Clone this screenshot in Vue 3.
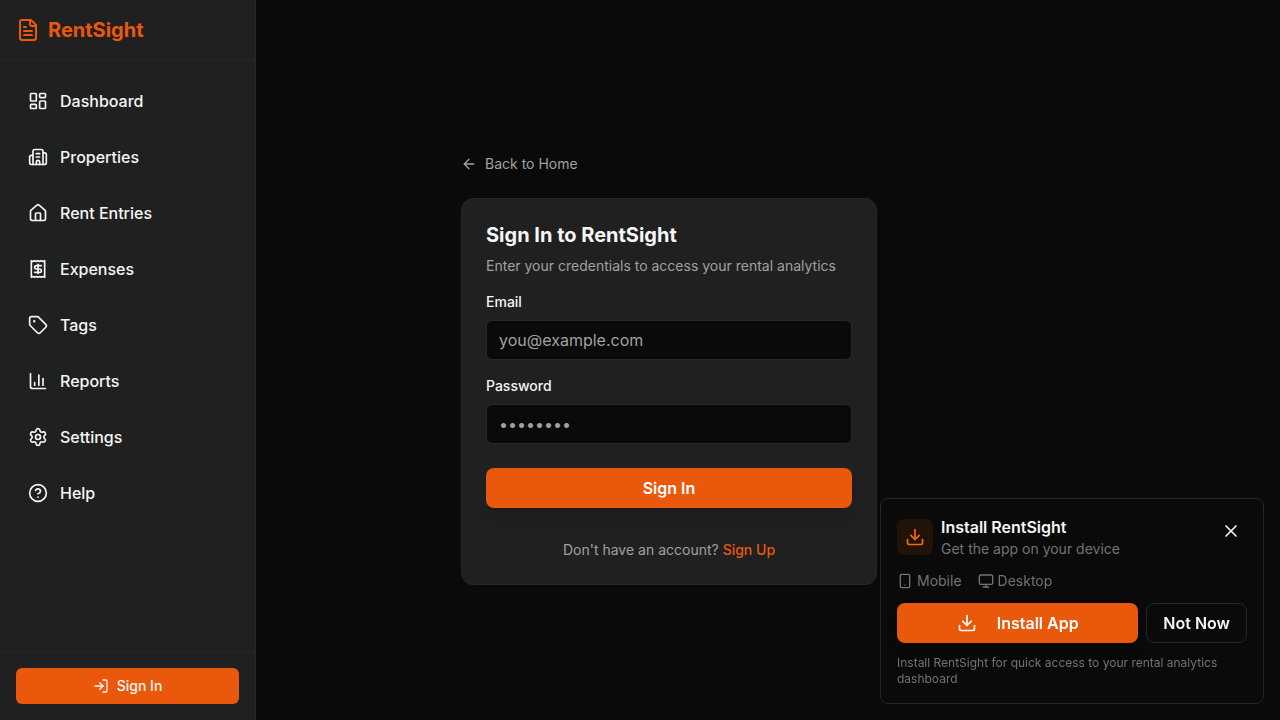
<script setup>
import { h } from 'vue'

const glyphs = {
  file: ['M15 2H6a2 2 0 0 0-2 2v16a2 2 0 0 0 2 2h12a2 2 0 0 0 2-2V7Z', 'M14 2v4a2 2 0 0 0 2 2h4', 'M10 9H8', 'M16 13H8', 'M16 17H8'],
  dashboard: ['M4 3h5a1 1 0 0 1 1 1v7a1 1 0 0 1-1 1H4a1 1 0 0 1-1-1V4a1 1 0 0 1 1-1Z', 'M15 3h5a1 1 0 0 1 1 1v3a1 1 0 0 1-1 1h-5a1 1 0 0 1-1-1V4a1 1 0 0 1 1-1Z', 'M15 12h5a1 1 0 0 1 1 1v7a1 1 0 0 1-1 1h-5a1 1 0 0 1-1-1v-7a1 1 0 0 1 1-1Z', 'M4 16h5a1 1 0 0 1 1 1v3a1 1 0 0 1-1 1H4a1 1 0 0 1-1-1v-3a1 1 0 0 1 1-1Z'],
  building: ['M10 12h4', 'M10 8h4', 'M14 21v-3a2 2 0 0 0-4 0v3', 'M6 10H4a2 2 0 0 0-2 2v7a2 2 0 0 0 2 2h16a2 2 0 0 0 2-2V9a2 2 0 0 0-2-2h-2', 'M6 21V5a2 2 0 0 1 2-2h8a2 2 0 0 1 2 2v16'],
  house: ['M15 21v-8a1 1 0 0 0-1-1h-4a1 1 0 0 0-1 1v8', 'M3 10a2 2 0 0 1 .709-1.528l7-6a2 2 0 0 1 2.582 0l7 6A2 2 0 0 1 21 10v9a2 2 0 0 1-2 2H5a2 2 0 0 1-2-2z'],
  receipt: ['M4 2v20l2-1 2 1 2-1 2 1 2-1 2 1 2-1 2 1V2l-2 1-2-1-2 1-2-1-2 1-2-1-2 1Z', 'M16 8h-6a2 2 0 1 0 0 4h4a2 2 0 1 1 0 4H8', 'M12 17.5v-11'],
  tag: ['M12.586 2.586A2 2 0 0 0 11.172 2H4a2 2 0 0 0-2 2v7.172a2 2 0 0 0 .586 1.414l8.704 8.704a2.426 2.426 0 0 0 3.42 0l6.58-6.58a2.426 2.426 0 0 0 0-3.42z', 'M7 7.5a.5.5 0 1 0 1 0a.5.5 0 1 0-1 0'],
  chart: ['M3 3v16a2 2 0 0 0 2 2h16', 'M18 17V9', 'M13 17V5', 'M8 17v-3'],
  gear: ['M9.671 4.136a2.34 2.34 0 0 1 4.659 0 2.34 2.34 0 0 0 3.319 1.915 2.34 2.34 0 0 1 2.33 4.033 2.34 2.34 0 0 0 0 3.831 2.34 2.34 0 0 1-2.33 4.033 2.34 2.34 0 0 0-3.319 1.915 2.34 2.34 0 0 1-4.659 0 2.34 2.34 0 0 0-3.32-1.915 2.34 2.34 0 0 1-2.33-4.033 2.34 2.34 0 0 0 0-3.831A2.34 2.34 0 0 1 6.35 6.051a2.34 2.34 0 0 0 3.319-1.915', 'M9 12a3 3 0 1 0 6 0a3 3 0 1 0-6 0'],
  help: ['M2 12a10 10 0 1 0 20 0a10 10 0 1 0-20 0', 'M9.09 9a3 3 0 0 1 5.83 1c0 2-3 3-3 3', 'M12 17h.01'],
  login: ['m10 17 5-5-5-5', 'M15 12H3', 'M15 3h4a2 2 0 0 1 2 2v14a2 2 0 0 1-2 2h-4'],
  back: ['m12 19-7-7 7-7', 'M19 12H5'],
  download: ['M12 15V3', 'M21 15v4a2 2 0 0 1-2 2H5a2 2 0 0 1-2-2v-4', 'm7 10 5 5 5-5'],
  close: ['M18 6 6 18', 'm6 6 12 12'],
  phone: ['M7 2h10a2 2 0 0 1 2 2v16a2 2 0 0 1-2 2H7a2 2 0 0 1-2-2V4a2 2 0 0 1 2-2Z', 'M12 18h.01'],
  monitor: ['M4 3h16a2 2 0 0 1 2 2v10a2 2 0 0 1-2 2H4a2 2 0 0 1-2-2V5a2 2 0 0 1 2-2Z', 'M8 21h8', 'M12 17v4']
}

const Icon = (props) =>
  h(
    'svg',
    {
      width: props.size,
      height: props.size,
      viewBox: '0 0 24 24',
      fill: 'none',
      stroke: 'currentColor',
      'stroke-width': 2,
      'stroke-linecap': 'round',
      'stroke-linejoin': 'round',
      'aria-hidden': 'true'
    },
    glyphs[props.name].map((d) => h('path', { d }))
  )
Icon.props = ['name', 'size']

const links = [
  { label: 'Dashboard', icon: 'dashboard' },
  { label: 'Properties', icon: 'building' },
  { label: 'Rent Entries', icon: 'house' },
  { label: 'Expenses', icon: 'receipt' },
  { label: 'Tags', icon: 'tag' },
  { label: 'Reports', icon: 'chart' },
  { label: 'Settings', icon: 'gear' },
  { label: 'Help', icon: 'help' }
]
</script>

<template>
  <div class="shell">
    <aside class="sidebar">
      <a class="brand" href="#"><Icon name="file" size="24" /><span>RentSight</span></a>
      <nav class="nav">
        <a v-for="link in links" :key="link.label" class="nav-link" href="#">
          <Icon :name="link.icon" size="20" /><span>{{ link.label }}</span>
        </a>
      </nav>
      <div class="sidebar-foot">
        <button class="side-signin" type="button"><Icon name="login" size="16" />Sign In</button>
      </div>
    </aside>

    <main class="main">
      <div class="auth">
        <a class="back" href="#"><Icon name="back" size="16" />Back to Home</a>
        <form class="card" @submit.prevent>
          <h1 class="title">Sign In to RentSight</h1>
          <p class="desc">Enter your credentials to access your rental analytics</p>
          <div class="field">
            <label for="email">Email</label>
            <input id="email" type="email" placeholder="you@example.com" />
          </div>
          <div class="field">
            <label for="password">Password</label>
            <input id="password" type="password" placeholder="••••••••" />
          </div>
          <button class="primary submit" type="submit">Sign In</button>
          <p class="signup">Don't have an account? <a href="#">Sign Up</a></p>
        </form>
      </div>
    </main>

    <section class="toast" aria-label="Install RentSight">
      <div class="toast-head">
        <div class="badge"><Icon name="download" size="20" /></div>
        <div class="toast-text">
          <h2>Install RentSight</h2>
          <p>Get the app on your device</p>
        </div>
        <button class="close" type="button" aria-label="Close"><Icon name="close" size="20" /></button>
      </div>
      <div class="devices">
        <span><Icon name="phone" size="16" />Mobile</span>
        <span><Icon name="monitor" size="16" />Desktop</span>
      </div>
      <div class="actions">
        <button class="primary install" type="button"><Icon name="download" size="20" />Install App</button>
        <button class="outline" type="button">Not Now</button>
      </div>
      <p class="note">Install RentSight for quick access to your rental analytics dashboard</p>
    </section>
  </div>
</template>

<style>
body {
  background: #0a0a0a;
}
</style>

<style scoped>
* {
  box-sizing: border-box;
  margin: 0;
}
.shell {
  display: flex;
  min-height: 100vh;
  background: #0a0a0a;
  color: #f5f5f5;
  font: 400 16px/24px Inter, "Liberation Sans", sans-serif;
}
svg {
  flex: none;
  display: block;
}
a {
  color: inherit;
  text-decoration: none;
}
button,
input {
  font: inherit;
  color: inherit;
}
button {
  display: flex;
  align-items: center;
  justify-content: center;
  border: 0;
  padding: 0;
  cursor: pointer;
}
.sidebar {
  display: flex;
  flex-direction: column;
  flex: none;
  width: 256px;
  background: #202020;
  border-right: 1px solid #272727;
}
.brand {
  display: flex;
  align-items: center;
  gap: 8px;
  padding: 16px;
  border-bottom: 1px solid #272727;
  color: #ea580c;
  font-size: 20px;
  line-height: 28px;
  font-weight: 700;
}
.nav {
  display: flex;
  flex: 1;
  flex-direction: column;
  gap: 8px;
  padding: 16px;
}
.nav-link {
  display: flex;
  align-items: center;
  gap: 12px;
  padding: 12px;
  border-radius: 8px;
  font-weight: 500;
}
.sidebar-foot {
  padding: 16px;
  border-top: 1px solid #272727;
}
.side-signin {
  width: 100%;
  height: 36px;
  gap: 8px;
  border-radius: 6px;
  background: #ea580c;
  font-size: 14px;
  font-weight: 500;
}
.main {
  display: flex;
  flex: 1;
  align-items: center;
  justify-content: center;
  padding: 11px 198px 0 0;
}
.auth {
  width: 100%;
  max-width: 416px;
}
.back {
  display: inline-flex;
  align-items: center;
  gap: 8px;
  height: 36px;
  margin-bottom: 16px;
  color: #a1a1a1;
  font-size: 14px;
  line-height: 20px;
  vertical-align: top;
}
.card {
  padding: 24px;
  border: 1px solid #272727;
  border-radius: 12px;
  background: #202020;
}
.title {
  margin-bottom: 8px;
  font-size: 20px;
  line-height: 25px;
  font-weight: 700;
}
.desc {
  color: #a1a1a1;
  font-size: 14px;
  line-height: 20px;
}
.field {
  display: flex;
  flex-direction: column;
  gap: 8px;
  margin-top: 16px;
}
.field label {
  font-size: 14px;
  line-height: 20px;
  font-weight: 500;
}
.field input {
  width: 100%;
  height: 40px;
  padding: 8px 12px;
  border: 1px solid #272727;
  border-radius: 6px;
  background: #0a0a0a;
}
.field input::placeholder {
  color: #a1a1a1;
  opacity: 1;
}
.primary {
  height: 40px;
  border-radius: 8px;
  background: #ea580c;
  color: #ffffff;
  font-weight: 600;
  box-shadow: 0 10px 15px -3px rgba(0, 0, 0, 0.1), 0 4px 6px -4px rgba(0, 0, 0, 0.1);
}
.submit {
  width: 100%;
  margin-top: 24px;
}
.signup {
  margin-top: 32px;
  color: #a1a1a1;
  font-size: 14px;
  line-height: 20px;
  text-align: center;
}
.signup a {
  color: #ea580c;
  font-weight: 500;
}
.toast {
  position: fixed;
  right: 16px;
  bottom: 16px;
  display: flex;
  flex-direction: column;
  gap: 12px;
  width: 384px;
  padding: 16px;
  border: 1px solid #262626;
  border-radius: 8px;
  background: #0a0a0a;
}
.toast-head {
  display: flex;
  align-items: center;
  gap: 8px;
}
.badge {
  padding: 8px;
  border-radius: 8px;
  background: rgba(255, 105, 0, 0.1);
  color: #ff6900;
}
.toast-text {
  flex: 1;
}
.toast-text h2 {
  font-size: 16px;
  line-height: 24px;
  font-weight: 600;
}
.toast-text p {
  color: #737373;
  font-size: 14px;
  line-height: 20px;
}
.close {
  align-self: flex-start;
  width: 32px;
  height: 32px;
  background: transparent;
}
.devices {
  display: flex;
  gap: 16px;
  color: #737373;
  font-size: 14px;
  line-height: 20px;
}
.devices span {
  display: flex;
  align-items: center;
  gap: 4px;
}
.actions {
  display: flex;
  gap: 8px;
}
.install {
  flex: 1;
  gap: 20px;
}
.outline {
  height: 40px;
  padding: 0 16px;
  border: 1px solid #262626;
  border-radius: 8px;
  background: transparent;
  font-weight: 600;
}
.note {
  color: #737373;
  font-size: 12px;
  line-height: 16px;
}
</style>
